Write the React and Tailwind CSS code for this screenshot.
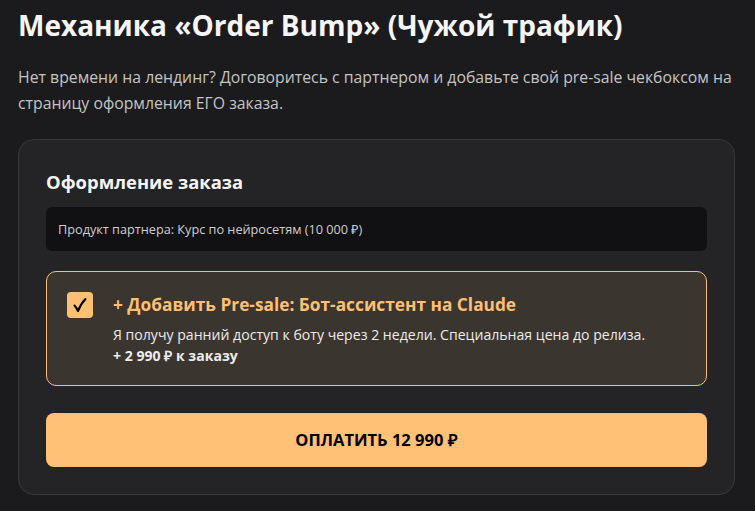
export default function App(){
  return (
    <main className="min-h-screen bg-[#1b1b1d] pl-[18px] pr-[20px] pt-[4px] text-white" style={{fontFamily:"'Open Sans', sans-serif"}}>
      <h1 className="text-[28px] font-bold leading-[42px] text-[#f5f5f5]">Механика «Order Bump» (Чужой трафик)</h1>
      <p className="mt-[18px] text-[15.8px] leading-[26px] text-[#c4c4c4]">
        Нет времени на лендинг? Договоритесь с партнером и добавьте свой pre-sale чекбоксом на страницу оформления ЕГО заказа.
      </p>
      <div className="mt-[23px] rounded-2xl border border-[#38383b] bg-[#242426] px-[27px] pt-7 pb-[27px]">
        <h2 className="text-[18.4px] font-bold leading-[28px] text-[#f5f5f5]">Оформление заказа</h2>
        <div className="mt-[11px] rounded-md bg-[#111113] px-3 py-[12px] text-[12.7px] leading-[20px] text-[#cfcfcf]">
          Продукт партнера: Курс по нейросетям (10 000 ₽)
        </div>
        <div className="mt-5 flex gap-5 rounded-[10px] border border-[#ffbd70] bg-[#3b352f] px-5 pt-5 pb-[19px]">
          <div className="h-[26px] w-[26px] shrink-0 rounded-[4px] bg-[#ffc075]">
            <svg viewBox="0 0 26 26" width="26" height="26">
              <path d="M7.5 13.5 Q9.5 15.5 11 19 Q14 11.5 18.5 7" fill="none" stroke="#000" strokeWidth="2.1" strokeLinecap="round" strokeLinejoin="round" />
            </svg>
          </div>
          <div>
            <div className="text-[17.3px] font-bold leading-[26px] text-[#ffbf75]">+ Добавить Pre-sale: Бот-ассистент на Claude</div>
            <div className="mt-[6px] text-[14.1px] leading-[21px] text-[#ececec]">Я получу ранний доступ к боту через 2 недели. Специальная цена до релиза.</div>
            <div className="text-[14.1px] font-bold leading-[21px] text-[#ececec]">+ 2 990 ₽ к заказу</div>
          </div>
        </div>
        <button className="mt-[27px] h-[54px] w-full rounded-lg bg-[#ffc175] text-[16.5px] font-bold uppercase text-black">Оплатить 12 990 ₽</button>
      </div>
    </main>
  );
}
